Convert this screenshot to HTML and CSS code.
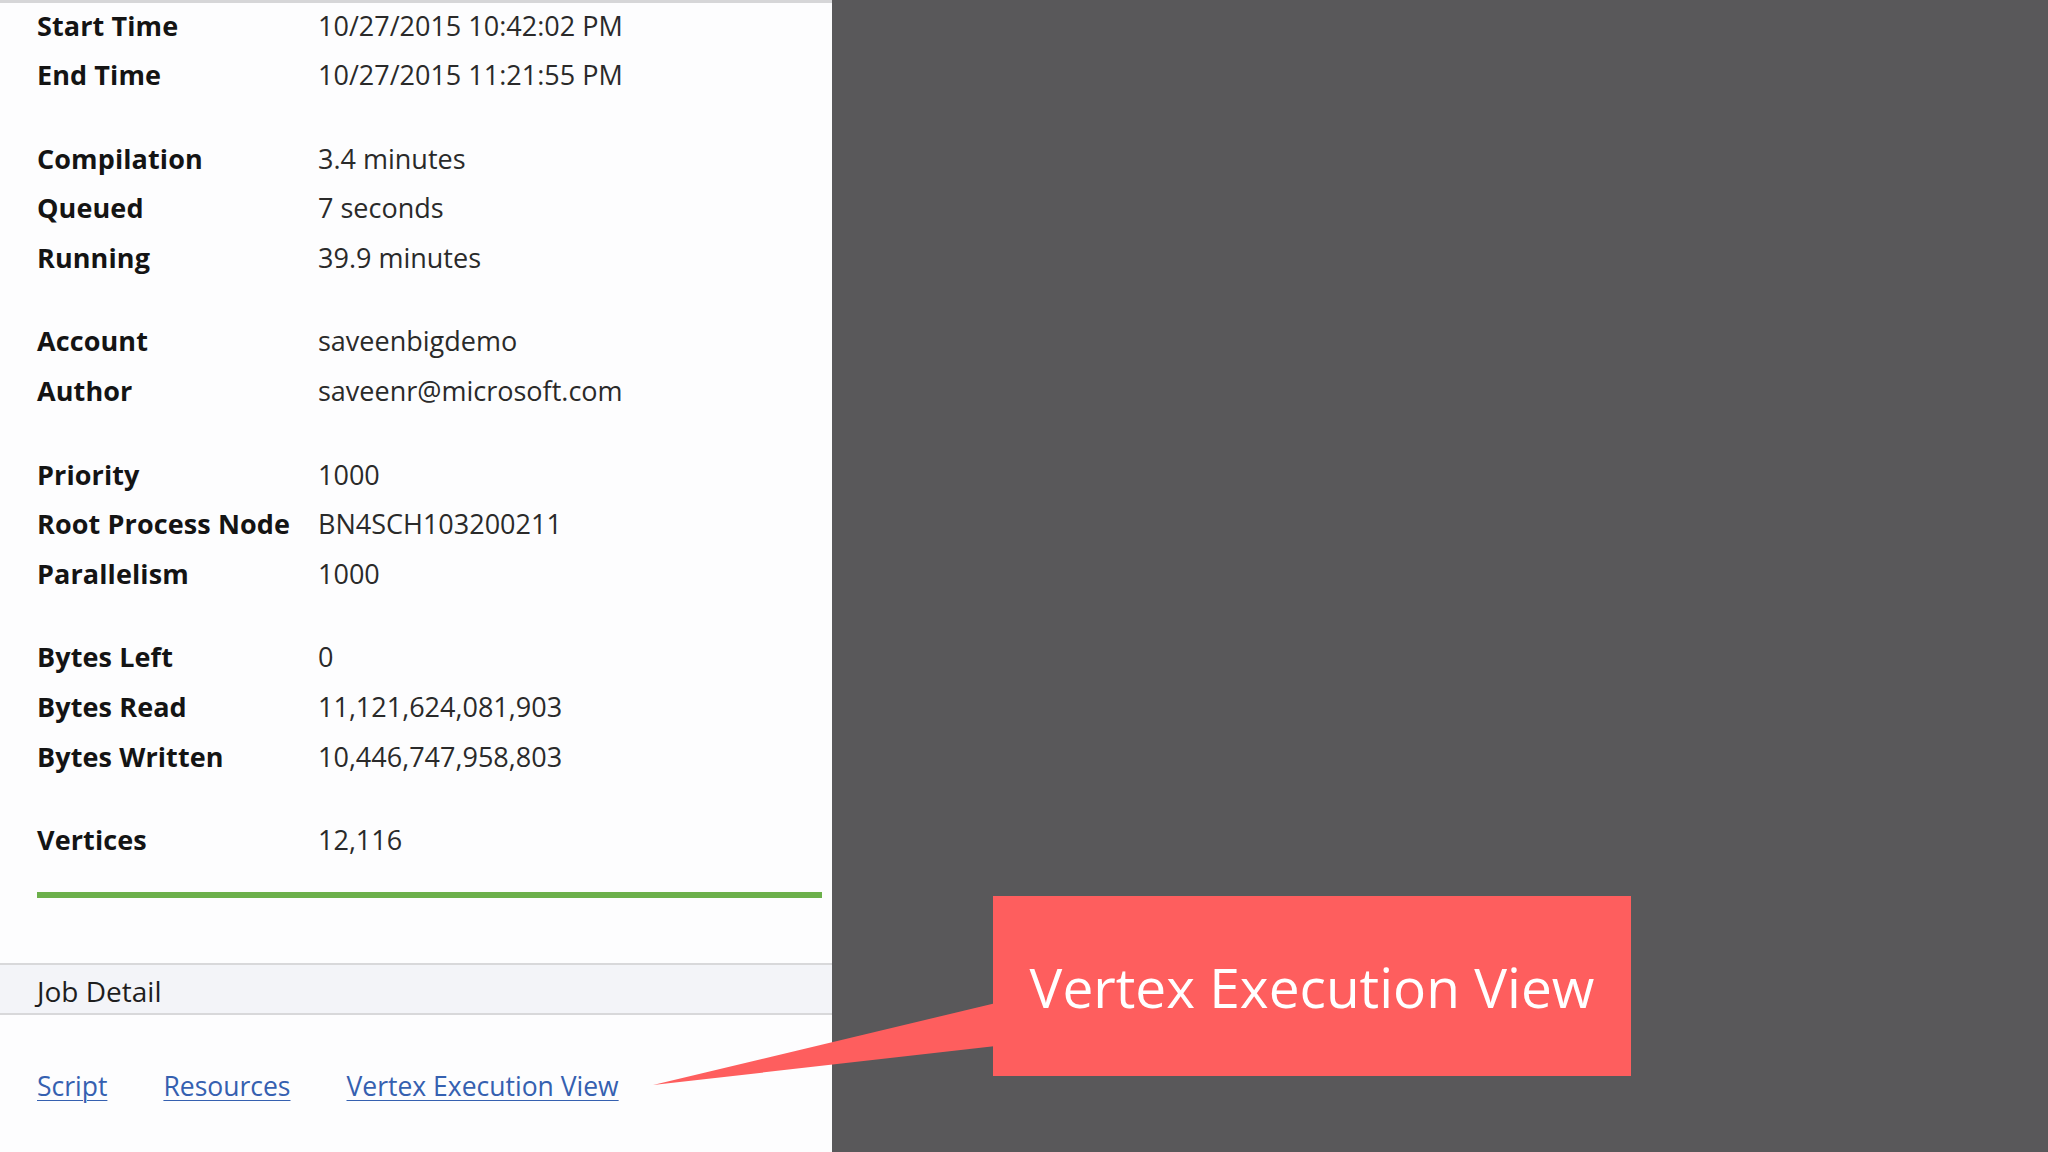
FILE: index.html
```html
<!DOCTYPE html>
<html>
<head>
<meta charset="utf-8">
<link rel="stylesheet" href="styles.css">
</head>
<body>
<div class="stage">
  <section class="panel">
    <div class="details">
      <div class="group">
        <div class="row"><span class="label">Start Time</span><span class="value">10/27/2015 10:42:02 PM</span></div>
        <div class="row"><span class="label">End Time</span><span class="value">10/27/2015 11:21:55 PM</span></div>
      </div>
      <div class="group">
        <div class="row"><span class="label">Compilation</span><span class="value">3.4 minutes</span></div>
        <div class="row"><span class="label">Queued</span><span class="value">7 seconds</span></div>
        <div class="row"><span class="label">Running</span><span class="value">39.9 minutes</span></div>
      </div>
      <div class="group">
        <div class="row"><span class="label">Account</span><span class="value">saveenbigdemo</span></div>
        <div class="row"><span class="label">Author</span><span class="value">saveenr@microsoft.com</span></div>
      </div>
      <div class="group">
        <div class="row"><span class="label">Priority</span><span class="value">1000</span></div>
        <div class="row"><span class="label">Root Process Node</span><span class="value">BN4SCH103200211</span></div>
        <div class="row"><span class="label">Parallelism</span><span class="value">1000</span></div>
      </div>
      <div class="group">
        <div class="row"><span class="label">Bytes Left</span><span class="value">0</span></div>
        <div class="row"><span class="label">Bytes Read</span><span class="value">11,121,624,081,903</span></div>
        <div class="row"><span class="label">Bytes Written</span><span class="value">10,446,747,958,803</span></div>
      </div>
      <div class="group">
        <div class="row"><span class="label">Vertices</span><span class="value">12,116</span></div>
      </div>
      <div class="progress"><div class="progress-fill"></div></div>
    </div>
    <div class="section-header">Job Detail</div>
    <nav class="links">
      <a href="#" class="link">Script</a>
      <a href="#" class="link">Resources</a>
      <a href="#" class="link">Vertex Execution View</a>
    </nav>
  </section>
  <section class="backdrop"></section>
  <div class="callout">
    <svg class="callout-tail" width="346" height="90" viewBox="0 0 346 90"><polygon points="346,3 346,46 3,85" fill="#fe5e5e"/></svg>
    <div class="callout-box">Vertex Execution View</div>
  </div>
</div>
</body>
</html>
```

FILE: styles.css
```css
html, body {
  margin: 0;
  padding: 0;
}
body {
  width: 2048px;
  height: 1152px;
  overflow: hidden;
  font-family: "Open Sans", "Noto Sans", sans-serif;
}
.stage {
  position: relative;
  display: flex;
  width: 2048px;
  height: 1152px;
}
.panel {
  width: 832px;
  flex: none;
  background: #fdfdfe;
  border-top: 3px solid #d6d6d8;
  box-sizing: border-box;
  display: flex;
  flex-direction: column;
}
.details {
  padding: 0 10px 0 37px;
  margin-top: -2.5px;
}
.group + .group {
  margin-top: 34px;
}
.row {
  display: grid;
  grid-template-columns: 281px 1fr;
  height: 49.6px;
  line-height: 49.6px;
  font-size: 27px;
  white-space: nowrap;
}
.label {
  font-weight: 700;
  color: #141414;
  letter-spacing: 0.1px;
}
.value {
  color: #2a2a2a;
}
.progress {
  margin-top: 27.5px;
  width: 785px;
  height: 6px;
  background: #e9ede6;
}
.progress-fill {
  width: 100%;
  height: 100%;
  background: #6cb04b;
}
.section-header {
  margin-top: 65px;
  height: 48px;
  line-height: 52px;
  border-top: 2px solid #d8d8da;
  border-bottom: 2px solid #d8d8da;
  background: #f3f4f8;
  padding-left: 37px;
  font-size: 28px;
  color: #1e1e1e;
}
.links {
  display: flex;
  gap: 56px;
  padding-left: 37px;
  margin-top: 46px;
  line-height: 50px;
  font-size: 26.5px;
}
.link {
  color: #3560b0;
  text-decoration: underline;
  text-underline-offset: 4px;
  text-decoration-thickness: 1px;
}
.backdrop {
  flex: 1;
  background: #59585a;
}
.callout {
  position: absolute;
  left: 650px;
  top: 896px;
}
.callout-tail {
  position: absolute;
  left: 0;
  top: 104px;
}
.callout-box {
  position: absolute;
  left: 343px;
  top: 0;
  width: 638px;
  height: 180px;
  background: #fe5e5e;
  color: #ffffff;
  font-size: 55px;
  display: flex;
  align-items: center;
  justify-content: center;
  white-space: nowrap;
}
```
